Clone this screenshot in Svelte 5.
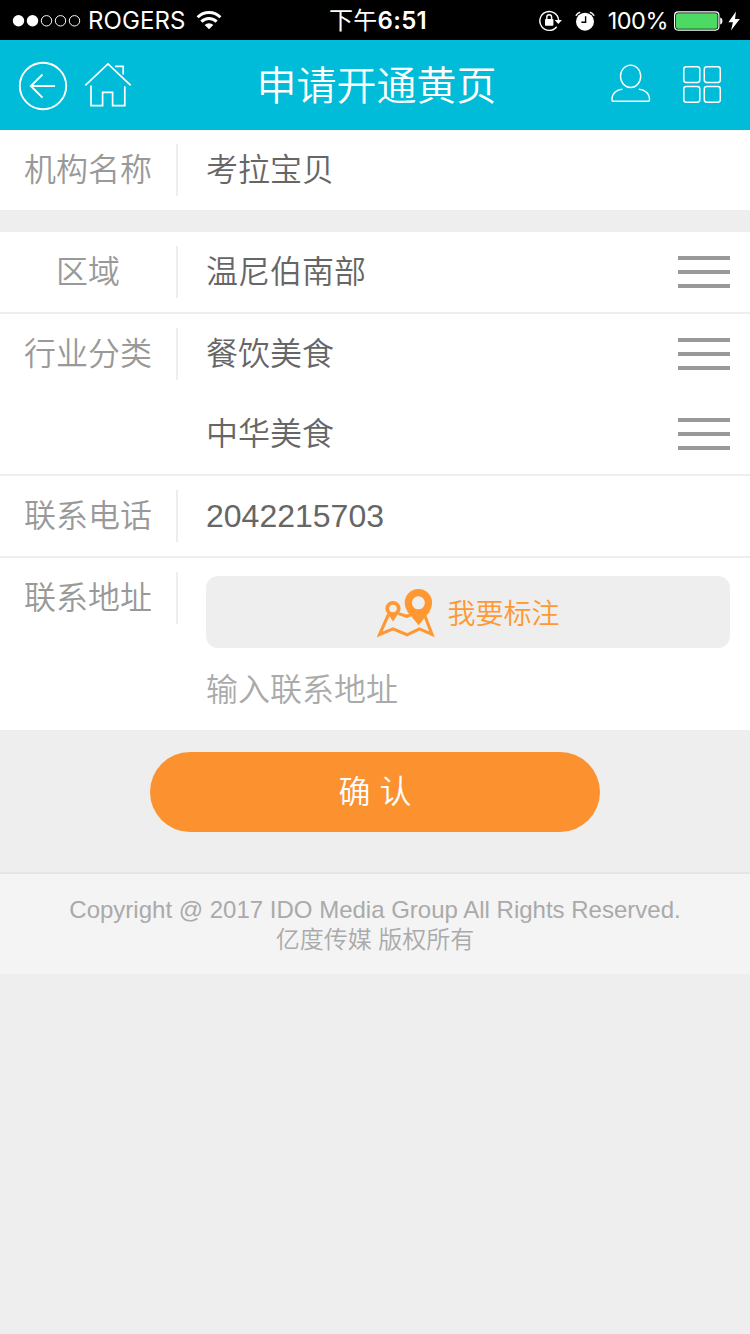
<script lang="ts">
  interface Field {
    text: string;
    menu?: boolean;
    placeholder?: boolean;
  }

  interface Row {
    label: string;
    fields: Field[];
    mark?: boolean;
  }

  const groups: Row[][] = [
    [{ label: "机构名称", fields: [{ text: "考拉宝贝" }] }],
    [
      { label: "区域", fields: [{ text: "温尼伯南部", menu: true }] },
      { label: "行业分类", fields: [{ text: "餐饮美食", menu: true }, { text: "中华美食", menu: true }] },
      { label: "联系电话", fields: [{ text: "2042215703" }] },
      { label: "联系地址", mark: true, fields: [{ text: "输入联系地址", placeholder: true }] },
    ],
  ];

  const signal = [true, true, false, false, false];
</script>

<div class="screen">
  <div class="status">
    <div class="status-left">
      <svg class="signal" width="70" height="14" viewBox="0 0 70 14">
        {#each signal as on, i}
          <circle cx={6.5 + i * 14} cy="6.8" r={on ? 5.7 : 5.2} fill={on ? "#fff" : "none"} stroke="#fff" stroke-width={on ? 0 : 1} />
        {/each}
      </svg>
      <span class="carrier">ROGERS</span>
      <svg class="wifi" width="26" height="20" viewBox="0 0 26 20" fill="none" stroke="#fff" stroke-width="3">
        <path d="M1.6 7.2a16.2 16.2 0 0 1 22.8 0" />
        <path d="M5.4 11.6a10.8 10.8 0 0 1 15.2 0" />
        <path d="M8.7 14.9a6.1 6.1 0 0 1 8.6 0L13 19.2z" fill="#fff" stroke="none" />
      </svg>
    </div>
    <div class="clock">下午<b>6:51</b></div>
    <div class="status-right">
      <svg class="lock" width="24" height="22" viewBox="0 0 24 22" fill="none" stroke="#fff">
        <path d="M17.7 16.7A9.4 9.4 0 1 1 19.6 10" stroke-width="1.4" />
        <path d="M15.6 10h7.4l-3.7 4z" fill="#fff" stroke="none" />
        <rect x="6" y="9" width="8.4" height="6.8" rx="0.8" fill="#fff" stroke="none" />
        <path d="M7.8 10V7.1a2.4 2.4 0 0 1 4.8 0V10" stroke-width="1.4" />
      </svg>
      <svg class="alarm" width="20" height="20" viewBox="0 0 20 20" fill="none" stroke="#fff">
        <circle cx="10" cy="10.7" r="9" fill="#fff" stroke="none" />
        <path d="M.9 4.8A6 6 0 0 1 5.2 1.2M14.8 1.2a6 6 0 0 1 4.3 3.6" stroke-width="1.5" />
        <path d="M10.6 5.2v6H6.4" stroke="#000" stroke-width="1.4" />
      </svg>
      <span class="percent">100%</span>
      <svg class="battery" width="50" height="20" viewBox="0 0 50 20">
        <rect x="0.6" y="0.9" width="44.3" height="18.2" rx="3.5" fill="none" stroke="#fff" stroke-width="1.2" />
        <rect x="2" y="2.3" width="41.5" height="15.4" rx="2" fill="#4cd964" />
        <path d="M46.2 6.5c3 .7 3 6.3 0 7z" fill="#fff" />
      </svg>
      <svg class="bolt" width="12" height="20" viewBox="0 0 12 20" fill="#fff">
        <path d="M8 .4.4 11.2h4.5L3 19.4 11.8 8H7z" />
      </svg>
    </div>
  </div>

  <header>
    <div class="nav">
      <svg class="back" width="50" height="50" viewBox="0 0 50 50" fill="none" stroke="#fff" stroke-width="1.9">
        <circle cx="25" cy="25" r="23.2" />
        <path d="M37 25H13M24.5 13.5 12.8 25l11.7 11.6" />
      </svg>
      <svg class="home" width="48" height="46" viewBox="0 0 48 46" fill="none" stroke="#fff" stroke-width="1.7">
        <path d="M1.3 24.3 24 2.8l22.7 21.5" />
        <path d="M31 5.3h8.2v8.2" />
        <path d="M7 24.5v20.1h11.6V31.4h10v13.2h12.2V25.3" />
      </svg>
    </div>
    <h1>申请开通黄页</h1>
    <div class="nav">
      <svg class="user" width="40" height="40" viewBox="0 0 40 40" fill="none" stroke="#fff" stroke-width="1.4">
        <ellipse cx="19.6" cy="12.3" rx="10.1" ry="11.2" />
        <path d="M11.4 25.1C5.5 25.6 1 29.6 1 35.2v.9c0 .8.5 1.2 1.2 1.2h35.1c.7 0 1.2-.4 1.2-1.2v-.9c0-5.6-4.5-9.6-10.7-10.1" />
      </svg>
      <svg class="grid" width="40" height="40" viewBox="0 0 40 40" fill="none" stroke="#fff" stroke-width="1.5">
        <rect x="1.8" y="2.8" width="16" height="15.6" rx="2.4" />
        <rect x="22.3" y="2.8" width="16" height="15.6" rx="2.4" />
        <rect x="1.8" y="22.6" width="16" height="15.6" rx="2.4" />
        <rect x="22.3" y="22.6" width="16" height="15.6" rx="2.4" />
      </svg>
    </div>
  </header>

  {#each groups as rows}
    <section class="group">
      {#each rows as row (row.label)}
        <div class="row">
          <div class="label">{row.label}</div>
          <div class="fields">
            {#if row.mark}
              <button class="mark">
                <svg width="58" height="50" viewBox="0 0 58 50" fill="none" stroke="#ff9832" stroke-width="3.1">
                  <path d="M11.5 26.5 2.6 46.4 16 40.9l14 5.9 12.5-5.9L55 46.4l-7.8-20.4M21.5 25.6l8.3 2.7 5.2-2" />
                  <path d="M9.3 23.6 16 33.5l6.7-9.9zM29.6 22.5l12 14.7 12-14.7z" fill="#ff9832" stroke="none" />
                  <circle cx="16" cy="20.5" r="5.7" fill="#eee" stroke-width="3.8" />
                  <circle cx="41.4" cy="14.8" r="10.1" fill="#eee" stroke-width="7.2" />
                </svg>
                <span>我要标注</span>
              </button>
            {/if}
            {#each row.fields as field}
              <div class="field" class:placeholder={field.placeholder}>
                <span>{field.text}</span>
                {#if field.menu}
                  <div class="menu"><i></i><i></i><i></i></div>
                {/if}
              </div>
            {/each}
          </div>
        </div>
      {/each}
    </section>
  {/each}

  <button class="confirm">确 认</button>

  <footer>
    <div>Copyright @ 2017 IDO Media Group All Rights Reserved.</div>
    <div>亿度传媒 版权所有</div>
  </footer>
</div>

<style>
  :global(body) { margin: 0; background: #eee; }
  .screen {
    width: 750px; min-height: 1334px; background: #eee; color: #666;
    font-family: "Liberation Sans", "Noto Sans CJK SC", sans-serif; font-weight: 350;
  }
  svg { display: block; flex-shrink: 0; }
  button { border: 0; padding: 0; font: inherit; }

  .status {
    display: grid; grid-template-columns: 1fr auto 1fr; align-items: center;
    height: 40px; background: #000; color: #fff;
    font-family: Inter, "Noto Sans CJK SC", sans-serif; font-size: 24px; line-height: 42px;
  }
  .status-left, .status-right { display: flex; align-items: center; }
  .status-left { padding-left: 12px; }
  .status-right { justify-content: flex-end; padding-right: 10px; }
  .carrier { margin-left: 6px; font-weight: 400; letter-spacing: 0.1px; }
  .wifi { margin: -3px 0 0 10px; }
  .clock { padding-left: 6px; font-weight: 400; letter-spacing: 0.3px; }
  .clock b { font-weight: 600; }
  .lock, .alarm { margin-top: -1px; }
  .alarm { margin-left: 12px; }
  .percent { margin-left: 13px; font-weight: 400; font-size: 23.5px; letter-spacing: -0.5px; }
  .battery { margin: -1px 0 0 6px; }
  .bolt { margin: -1px 0 0 4px; }

  header {
    display: flex; justify-content: space-between; align-items: center;
    height: 90px; padding: 0 28px 0 18px; box-sizing: border-box; background: #00bcd8; color: #fff;
  }
  .nav { display: flex; align-items: center; }
  .back { margin-top: 2px; }
  .home { margin: -2px 0 0 16px; }
  .user { margin: -2px 31px 0 0; }
  .grid { margin-top: -2px; }
  h1 { margin: 2px 0 0 10px; font-size: 40px; font-weight: 350; line-height: 80px; }

  .group { background: #fff; }
  .group + .group { margin-top: 22px; }
  .row { display: flex; align-items: flex-start; font-size: 32px; }
  .row + .row { border-top: 2px solid #eee; }
  .label {
    width: 176px; height: 52px; margin-top: 14px; border-right: 2px solid #eee;
    line-height: 52px; text-align: center; color: #999;
  }
  .fields { flex: 1; padding: 0 20px 0 28px; }
  .field { display: flex; justify-content: space-between; align-items: center; height: 80px; }
  .field span { line-height: 78px; }
  .placeholder { height: 82px; color: #aaa; }
  .placeholder span { line-height: 80px; padding-top: 2px; }
  .menu { display: flex; flex-direction: column; gap: 10px; width: 52px; }
  .menu i { height: 4px; background: #999; }
  .mark {
    display: flex; justify-content: center; align-items: center; gap: 12px;
    width: 100%; height: 72px; margin-top: 18px; padding-left: 1px; border-radius: 12px;
    background: #eee; color: #ff9832; font-size: 28px;
  }
  .mark svg { margin-top: 2px; }

  .confirm {
    display: block; width: 450px; height: 80px; margin: 22px auto 40px; border-radius: 40px;
    background: #fc9130; color: #fff; font-size: 32px; line-height: 78px;
  }
  footer {
    height: 102px; padding-top: 21px; box-sizing: border-box; border-top: 2px solid #e5e5e5;
    background: #f4f4f4; color: #aaa; font-size: 24px; line-height: 30px; text-align: center;
  }
</style>
